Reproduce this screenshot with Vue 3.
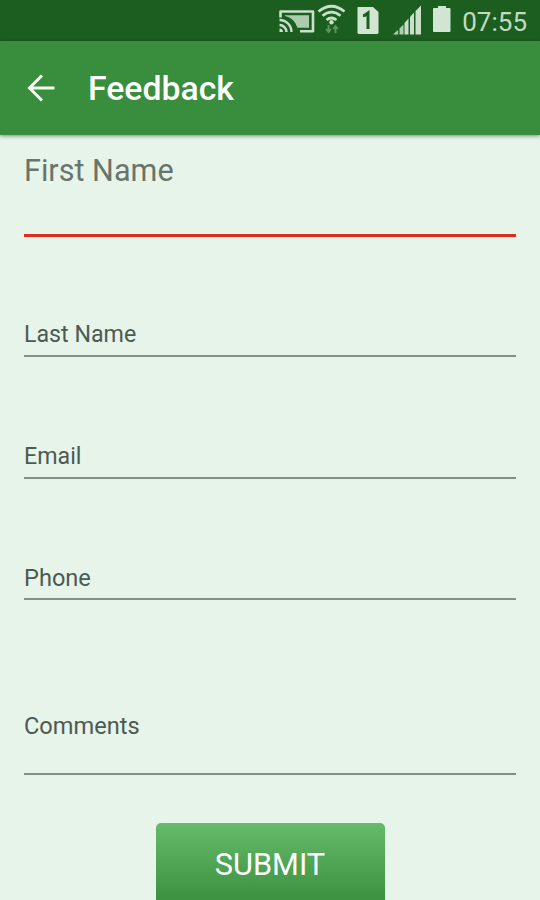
<template>
  <div class="screen">
    <div class="status-bar">
      <svg class="status-icons" width="188" height="41" viewBox="272 0 188 41">
        <!-- cast -->
        <path d="M285 15.300h24v12.400h-11.500q-3-9.500-12.500-11.700z" fill="#adcbad" />
        <g fill="none" stroke="#cbe0cb">
          <path d="M280.500 17.500v-6h32.500v19.800h-13" stroke-width="2.600" stroke-linejoin="round" />
          <path d="M279.500 20a12 12 0 0 1 12 12M279.500 25a7 7 0 0 1 7 7" stroke-width="2.400" />
        </g>
        <path d="M279.500 28.500a3.500 3.500 0 0 1 3.500 3.500h-3.500z" fill="#cbe0cb" />
        <!-- wifi -->
        <g fill="none" stroke="#cbe0cb" stroke-width="2.700">
          <path d="M318.500 11.500q13-10.500 26 0" />
          <path d="M322.500 15.800q9-7.300 18 0" />
          <path d="M326.500 20q5-4 10 0" />
        </g>
        <circle cx="331.500" cy="22.300" r="2.200" fill="#cbe0cb" />
        <path d="M328.500 25v7m-2.300-3l2.300 3 2.300-3M335.500 33v-7m-2.300 3l2.300-3 2.300 3" fill="none" stroke="#5f965f" stroke-width="1.800" />
        <!-- sim -->
        <path d="M358 7h15l5.500 5v20.500q0 1.500-1.500 1.500h-18q-1.500 0-1.500-1.500v-24.500q0-1 .5-1z" fill="#d2e5d2" />
        <path d="M363 15.500h1.500l3.500-2.500v16" fill="none" stroke="#1b5e20" stroke-width="3" />
        <!-- signal -->
        <path d="M393 34.500l5-4.500v4.500zM399.500 34.500v-6l4-4v10z" fill="#b2ceb2" />
        <path d="M404.500 34.500v-11.500l4-4.500v16zM410 34.500v-17.500l4-4.500v22zM415.500 34.500v-23.500l5.500-5.500v29z" fill="#cbe0cb" />
        <!-- battery -->
        <path d="M438 6h8v2h3.500q1 0 1 1v22q0 1-1 1h-15.500q-1 0-1-1v-22q0-1 1-1h4z" fill="#d2e5d2" />
      </svg>
      <span class="clock">07:55</span>
    </div>

    <header class="app-bar">
      <svg class="back" width="28" height="28" viewBox="0 0 28 28">
        <path d="M27.500 14H3M15 1.500L2.500 14 15 26.500" fill="none" stroke="#f4faf2" stroke-width="3" />
      </svg>
      <h1>Feedback</h1>
    </header>

    <form class="form" @submit.prevent>
      <div v-for="field in fields" :key="field.id" class="field" :class="field.id">
        <span class="label">{{ field.label }}</span>
      </div>
      <button class="submit" type="submit">SUBMIT</button>
    </form>
  </div>
</template>

<script setup>
const fields = [
  { id: 'first-name', label: 'First Name' },
  { id: 'last-name', label: 'Last Name' },
  { id: 'email', label: 'Email' },
  { id: 'phone', label: 'Phone' },
  { id: 'comments', label: 'Comments' },
]
</script>

<style>
body {
  background: #e7f4ea;
}
</style>

<style scoped>
.screen {
  box-sizing: border-box;
  width: 540px;
  height: 900px;
  overflow: hidden;
  background: #e7f4ea;
  font-family: Roboto, sans-serif;
}

.status-bar {
  display: flex;
  align-items: center;
  justify-content: flex-end;
  height: 41px;
  padding-right: 13px;
  background: #1b5e20;
}

.clock {
  width: 67px;
  padding-top: 2px;
  color: #c3dbc3;
  font-size: 26px;
  line-height: 30px;
  text-align: right;
}

.app-bar {
  display: flex;
  align-items: center;
  height: 94px;
  padding-left: 27px;
  background: #388e3c;
  box-shadow: 0 1px 4px rgba(0, 0, 0, 0.45);
}

h1 {
  margin: 2px 0 0 33px;
  color: #fff;
  font-size: 33.800px;
  font-weight: 500;
  line-height: 40px;
}

.form {
  display: flex;
  flex-direction: column;
  padding: 0 24px;
}

.field {
  display: flex;
  box-sizing: border-box;
  flex-direction: column;
  justify-content: flex-end;
  height: 121.500px;
  padding-bottom: 7px;
  border-bottom: 2px solid #839087;
}

.label {
  color: #4d5a51;
  font-size: 23.200px;
  line-height: 28px;
}

.first-name {
  justify-content: flex-start;
  height: 102px;
  padding: 17px 0 0;
  border-bottom: 3px solid #dc2d20;
}

.first-name .label {
  color: #69746c;
  font-size: 30.600px;
  line-height: 37px;
}

.last-name {
  height: 120px;
}

.phone {
  padding-bottom: 6px;
}

.comments {
  height: 175px;
  padding-bottom: 33px;
}

.phone .label,
.comments .label {
  font-size: 23.600px;
}

.submit {
  align-self: center;
  width: 229px;
  height: 84px;
  margin-top: 48px;
  padding: 0 0 2px;
  border: 0;
  border-radius: 5px;
  background: linear-gradient(#66bb6a, #388e3c);
  color: #fff;
  font-family: inherit;
  font-size: 30.700px;
}
</style>
